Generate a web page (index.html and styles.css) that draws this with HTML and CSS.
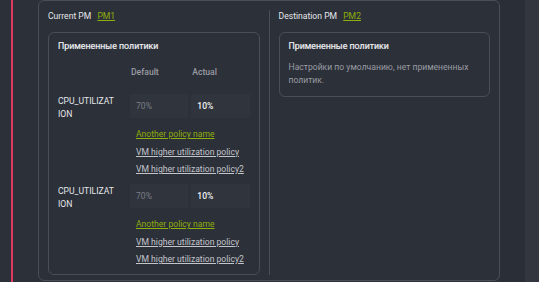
FILE: index.html
```html
<!DOCTYPE html>
<html lang="ru">
<head>
  <meta charset="UTF-8" />
  <meta name="viewport" content="width=device-width, initial-scale=1.0" />
  <title>Migration - PM policies</title>
  <link rel="stylesheet" href="styles.css">
</head>
<body>
  <div class="page">
    <div class="rail"></div>
    <div class="accent"></div>
    <main class="content">
      <section class="compare-card">
        <div class="pm-col">
          <div class="pm-head">Current PM <a href="#" class="pm-link">PM1</a></div>
          <div class="policy-box">
            <div class="box-title">Примененные политики</div>
            <div class="policy-grid">
              <div></div>
              <div class="col-head">Default</div>
              <div class="col-head">Actual</div>

              <div class="metric">CPU_UTILIZATION</div>
              <div class="cell cell-default">70%</div>
              <div class="cell cell-actual">10%</div>
              <div class="links">
                <a href="#" class="policy-link active">Another policy name</a>
                <a href="#" class="policy-link">VM higher utilization policy</a>
                <a href="#" class="policy-link">VM higher utilization policy2</a>
              </div>

              <div class="metric">CPU_UTILIZATION</div>
              <div class="cell cell-default">70%</div>
              <div class="cell cell-actual">10%</div>
              <div class="links">
                <a href="#" class="policy-link active">Another policy name</a>
                <a href="#" class="policy-link">VM higher utilization policy</a>
                <a href="#" class="policy-link">VM higher utilization policy2</a>
              </div>
            </div>
          </div>
        </div>
        <div class="divider"></div>
        <div class="pm-col">
          <div class="pm-head">Destination PM <a href="#" class="pm-link">PM2</a></div>
          <div class="policy-box">
            <div class="box-title">Примененные политики</div>
            <p class="empty-note">Настройки по умолчанию, нет примененных политик.</p>
          </div>
        </div>
      </section>
    </main>
    <div class="gutter"></div>
    <div class="scroll-track"></div>
  </div>
</body>
</html>
```

FILE: styles.css
```css
* {
  box-sizing: border-box;
  padding: 0;
  margin: 0;
}

body {
  background: #2c3039;
  font-family: Roboto, 'Noto Sans', sans-serif;
  font-size: 8.6px;
  color: #e6e7ea;
  overflow: hidden;
}

.page {
  display: flex;
  height: 282px;
}

.rail {
  width: 11px;
}

.accent {
  width: 2px;
  background: #e0395f;
}

.content {
  width: 487px;
  padding-left: 25px;
}

.compare-card {
  height: 281px;
  border: 1px solid #4a4e58;
  border-radius: 6px;
  padding: 9px 9px 8px;
  display: grid;
  grid-template-columns: 1fr 1px 1fr;
  column-gap: 9px;
}

.divider {
  background: #4a4e58;
}

.pm-head {
  line-height: 13px;
  margin-bottom: 9px;
  color: #e6e7ea;
}

.pm-link {
  color: #8eae0a;
  margin-left: 4px;
}

.policy-box {
  border: 1px solid #4a4e58;
  border-radius: 6px;
  padding: 7px 9px 9px;
}

.box-title {
  font-size: 8.8px;
  line-height: 12px;
  color: #f0f1f3;
  -webkit-text-stroke: 0.2px #f0f1f3;
}

.policy-grid {
  display: grid;
  grid-template-columns: 69px 1fr 1fr;
  column-gap: 3px;
  margin-top: 14px;
}

.col-head {
  font-weight: 500;
  color: #9a9ca3;
  line-height: 12px;
  margin-bottom: 16px;
  padding-left: 1px;
}

.metric {
  word-break: break-all;
  line-height: 13px;
  padding-top: 1px;
  padding-right: 13px;
  color: #e6e7ea;
}

.cell {
  background: #30343d;
  padding-left: 6px;
  line-height: 24px;
  height: 24px;
}

.cell-default {
  color: #7b7e86;
}

.cell-actual {
  color: #f2f3f5;
  font-weight: 500;
}

.links {
  grid-column: 2 / 4;
  display: flex;
  flex-direction: column;
  gap: 5.5px;
  padding: 7px 0 9px 6px;
}

.links:last-child {
  padding-bottom: 0;
}

.policy-link {
  color: #c3c5cb;
  line-height: 12px;
  white-space: nowrap;
}

.policy-link.active {
  color: #8eae0a;
}

.empty-note {
  margin-top: 9px;
  color: #9a9ca3;
  line-height: 13px;
}

.gutter {
  width: 25px;
  background: #2a2e37;
}

.scroll-track {
  flex: 1;
  background: #33363f;
}
```
